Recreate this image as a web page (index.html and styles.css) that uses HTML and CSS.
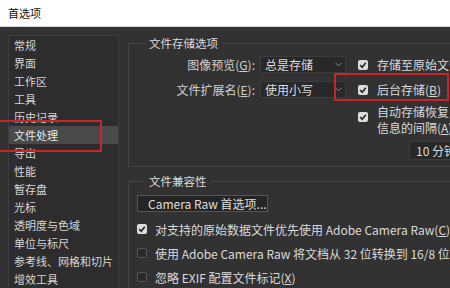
FILE: index.html
```html
<!DOCTYPE html>
<html lang="zh-CN">
<head>
<meta charset="utf-8">
<title>首选项</title>
<link rel="stylesheet" href="styles.css">
</head>
<body>
<div class="titlebar">首选项</div>
<div class="main">
  <ul class="sidebar">
    <li>常规</li>
    <li>界面</li>
    <li>工作区</li>
    <li>工具</li>
    <li>历史记录</li>
    <li class="active">文件处理</li>
    <li>导出</li>
    <li>性能</li>
    <li>暂存盘</li>
    <li>光标</li>
    <li>透明度与色域</li>
    <li>单位与标尺</li>
    <li>参考线、网格和切片</li>
    <li>增效工具</li>
  </ul>
  <div class="content">
    <fieldset class="group group-save">
      <legend>文件存储选项</legend>
      <div class="save-grid">
        <div class="field-label">图像预览(<u>G</u>):</div>
        <div class="select select-wide">总是存储<svg class="chev" width="7" height="5" viewBox="0 0 7 5"><polyline points="0.5,0.8 3.5,3.8 6.5,0.8" fill="none" stroke="#8a8a8a" stroke-width="1"/></svg></div>
        <div class="check-item"><span class="cb on"><svg width="10" height="10" viewBox="0 0 10 10"><polyline points="2.2,5.2 4.2,7.2 7.8,2.8" fill="none" stroke="#2a2a2a" stroke-width="1.7"/></svg></span><span class="cb-text">存储至原始文件夹(<u>S</u>)</span></div>

        <div class="field-label">文件扩展名(<u>E</u>):</div>
        <div class="select select-wide">使用小写<svg class="chev" width="7" height="5" viewBox="0 0 7 5"><polyline points="0.5,0.8 3.5,3.8 6.5,0.8" fill="none" stroke="#8a8a8a" stroke-width="1"/></svg></div>
        <div class="check-item"><span class="cb on"><svg width="10" height="10" viewBox="0 0 10 10"><polyline points="2.2,5.2 4.2,7.2 7.8,2.8" fill="none" stroke="#2a2a2a" stroke-width="1.7"/></svg></span><span class="cb-text">后台存储(<u>B</u>)</span></div>

        <div class="check-item multi"><span class="cb on"><svg width="10" height="10" viewBox="0 0 10 10"><polyline points="2.2,5.2 4.2,7.2 7.8,2.8" fill="none" stroke="#2a2a2a" stroke-width="1.7"/></svg></span><span class="cb-text">自动存储恢复<br>信息的间隔(<u>A</u>):</span></div>

        <div class="select select-min">10 分钟</div>
      </div>
    </fieldset>

    <fieldset class="group group-compat">
      <legend>文件兼容性</legend>
      <div class="btn">Camera Raw 首选项...</div>
      <div class="compat-list">
        <div class="check-row"><span class="cb on"><svg width="10" height="10" viewBox="0 0 10 10"><polyline points="2.2,5.2 4.2,7.2 7.8,2.8" fill="none" stroke="#2a2a2a" stroke-width="1.7"/></svg></span><span class="cb-text">对支持的原始数据文件优先使用 Adobe Camera Raw(<u>C</u>)</span></div>
        <div class="check-row"><span class="cb off"></span><span class="cb-text">使用 Adobe Camera Raw 将文档从 32 位转换到 16/8 位(<u>U</u>)</span></div>
        <div class="check-row"><span class="cb off"></span><span class="cb-text">忽略 EXIF 配置文件标记(<u>X</u>)</span></div>
      </div>
    </fieldset>
  </div>
</div>
<div class="annot annot-side"></div>
<div class="annot annot-bg"></div>
</body>
</html>
```
FILE: styles.css
```css
* { box-sizing: border-box; }
html, body { margin: 0; padding: 0; }
body {
  width: 450px;
  height: 288px;
  overflow: hidden;
  position: relative;
  background: #323232;
  color: #d8d8d8;
  font-family: "Noto Sans CJK SC", "Noto Sans", sans-serif;
}
u { text-decoration: underline; text-underline-offset: 1px; }

.titlebar {
  height: 27px;
  line-height: 27px;
  padding-left: 8px;
  background: #ffffff;
  color: #111;
  font-size: 11px;
  border-bottom: 1px solid #d6d6d6;
}

.main {
  display: flex;
  padding: 8px 0 0 8px;
  height: 261px;
  overflow: hidden;
}

.sidebar {
  flex: 0 0 111px;
  width: 111px;
  height: 262px;
  margin: 0;
  padding: 0;
  list-style: none;
  background: #2d2d2d;
  border: 1px solid #3e3e3e;
  font-size: 11px;
  color: #d6d6d6;
}
.sidebar li {
  height: 18px;
  line-height: 18px;
  padding-left: 5px;
  white-space: nowrap;
}
.sidebar li.active { background: #4a4a4a; color: #e6e6e6; }

.content {
  flex: 0 0 360px;
  width: 360px;
  margin-left: 9px;
  font-size: 12px;
}

.group {
  margin: 0;
  padding: 0;
  border: 1px solid #444444;
  min-width: 0;
}
.group legend {
  margin-left: 16px;
  padding: 0 4px;
  font-size: 11.5px;
  line-height: 16px;
  color: #dadada;
}

.save-grid {
  display: grid;
  grid-template-columns: 131px 98px 1fr;
  grid-template-rows: 25px 25px auto auto;
  padding: 1px 0 6px 0;
}
.field-label {
  text-align: right;
  padding-right: 5px;
  line-height: 25px;
  color: #cfcfcf;
  white-space: nowrap;
}
.select {
  display: flex;
  align-items: center;
  background: #282828;
  border: 1px solid #3c3c3c;
  color: #dcdcdc;
  white-space: nowrap;
}
.select-wide {
  width: 86px;
  height: 17px;
  align-self: center;
  padding-left: 4px;
  justify-content: space-between;
  padding-right: 3px;
}
.chev { flex: 0 0 auto; }

.check-item {
  display: flex;
  align-items: center;
  white-space: nowrap;
  gap: 9px;
}
.check-item.multi {
  grid-column: 3;
  grid-row: 3;
  align-items: flex-start;
  padding-top: 2px;
}
.check-item.multi .cb { margin-top: 8px; }
.check-item.multi .cb-text { line-height: 16px; }

.select-min {
  grid-column: 3;
  grid-row: 4;
  margin-top: 5px;
  margin-left: 51px;
  width: 70px;
  height: 19px;
  padding-left: 6px;
}

.cb {
  flex: 0 0 10px;
  width: 10px;
  height: 10px;
  border-radius: 2px;
  display: inline-flex;
}
.cb.on { background: #dcdcdc; }
.cb.off { background: #2a2a2a; border: 1px solid #555; }
.cb-text { color: #dadada; }

.group-compat {
  margin-top: 6px;
  padding: 6px 0 0 8px;
  height: 130px;
}
.group-compat legend { margin-left: 8px; }
.btn {
  width: 131px;
  height: 17px;
  line-height: 15px;
  padding-left: 10px;
  background: #252525;
  border: 1px solid #555555;
  color: #dedede;
  white-space: nowrap;
}
.compat-list {
  margin-top: 5px;
  display: flex;
  flex-direction: column;
}
.check-row {
  height: 24px;
  display: flex;
  align-items: center;
  gap: 8px;
  white-space: nowrap;
}

.annot {
  position: absolute;
  border: 2px solid #c4262b;
  pointer-events: none;
}
.annot-side { left: -2px; top: 120px; width: 104px; height: 32px; }
.annot-bg { left: 334px; top: 73px; width: 115px; height: 28px; }
```
